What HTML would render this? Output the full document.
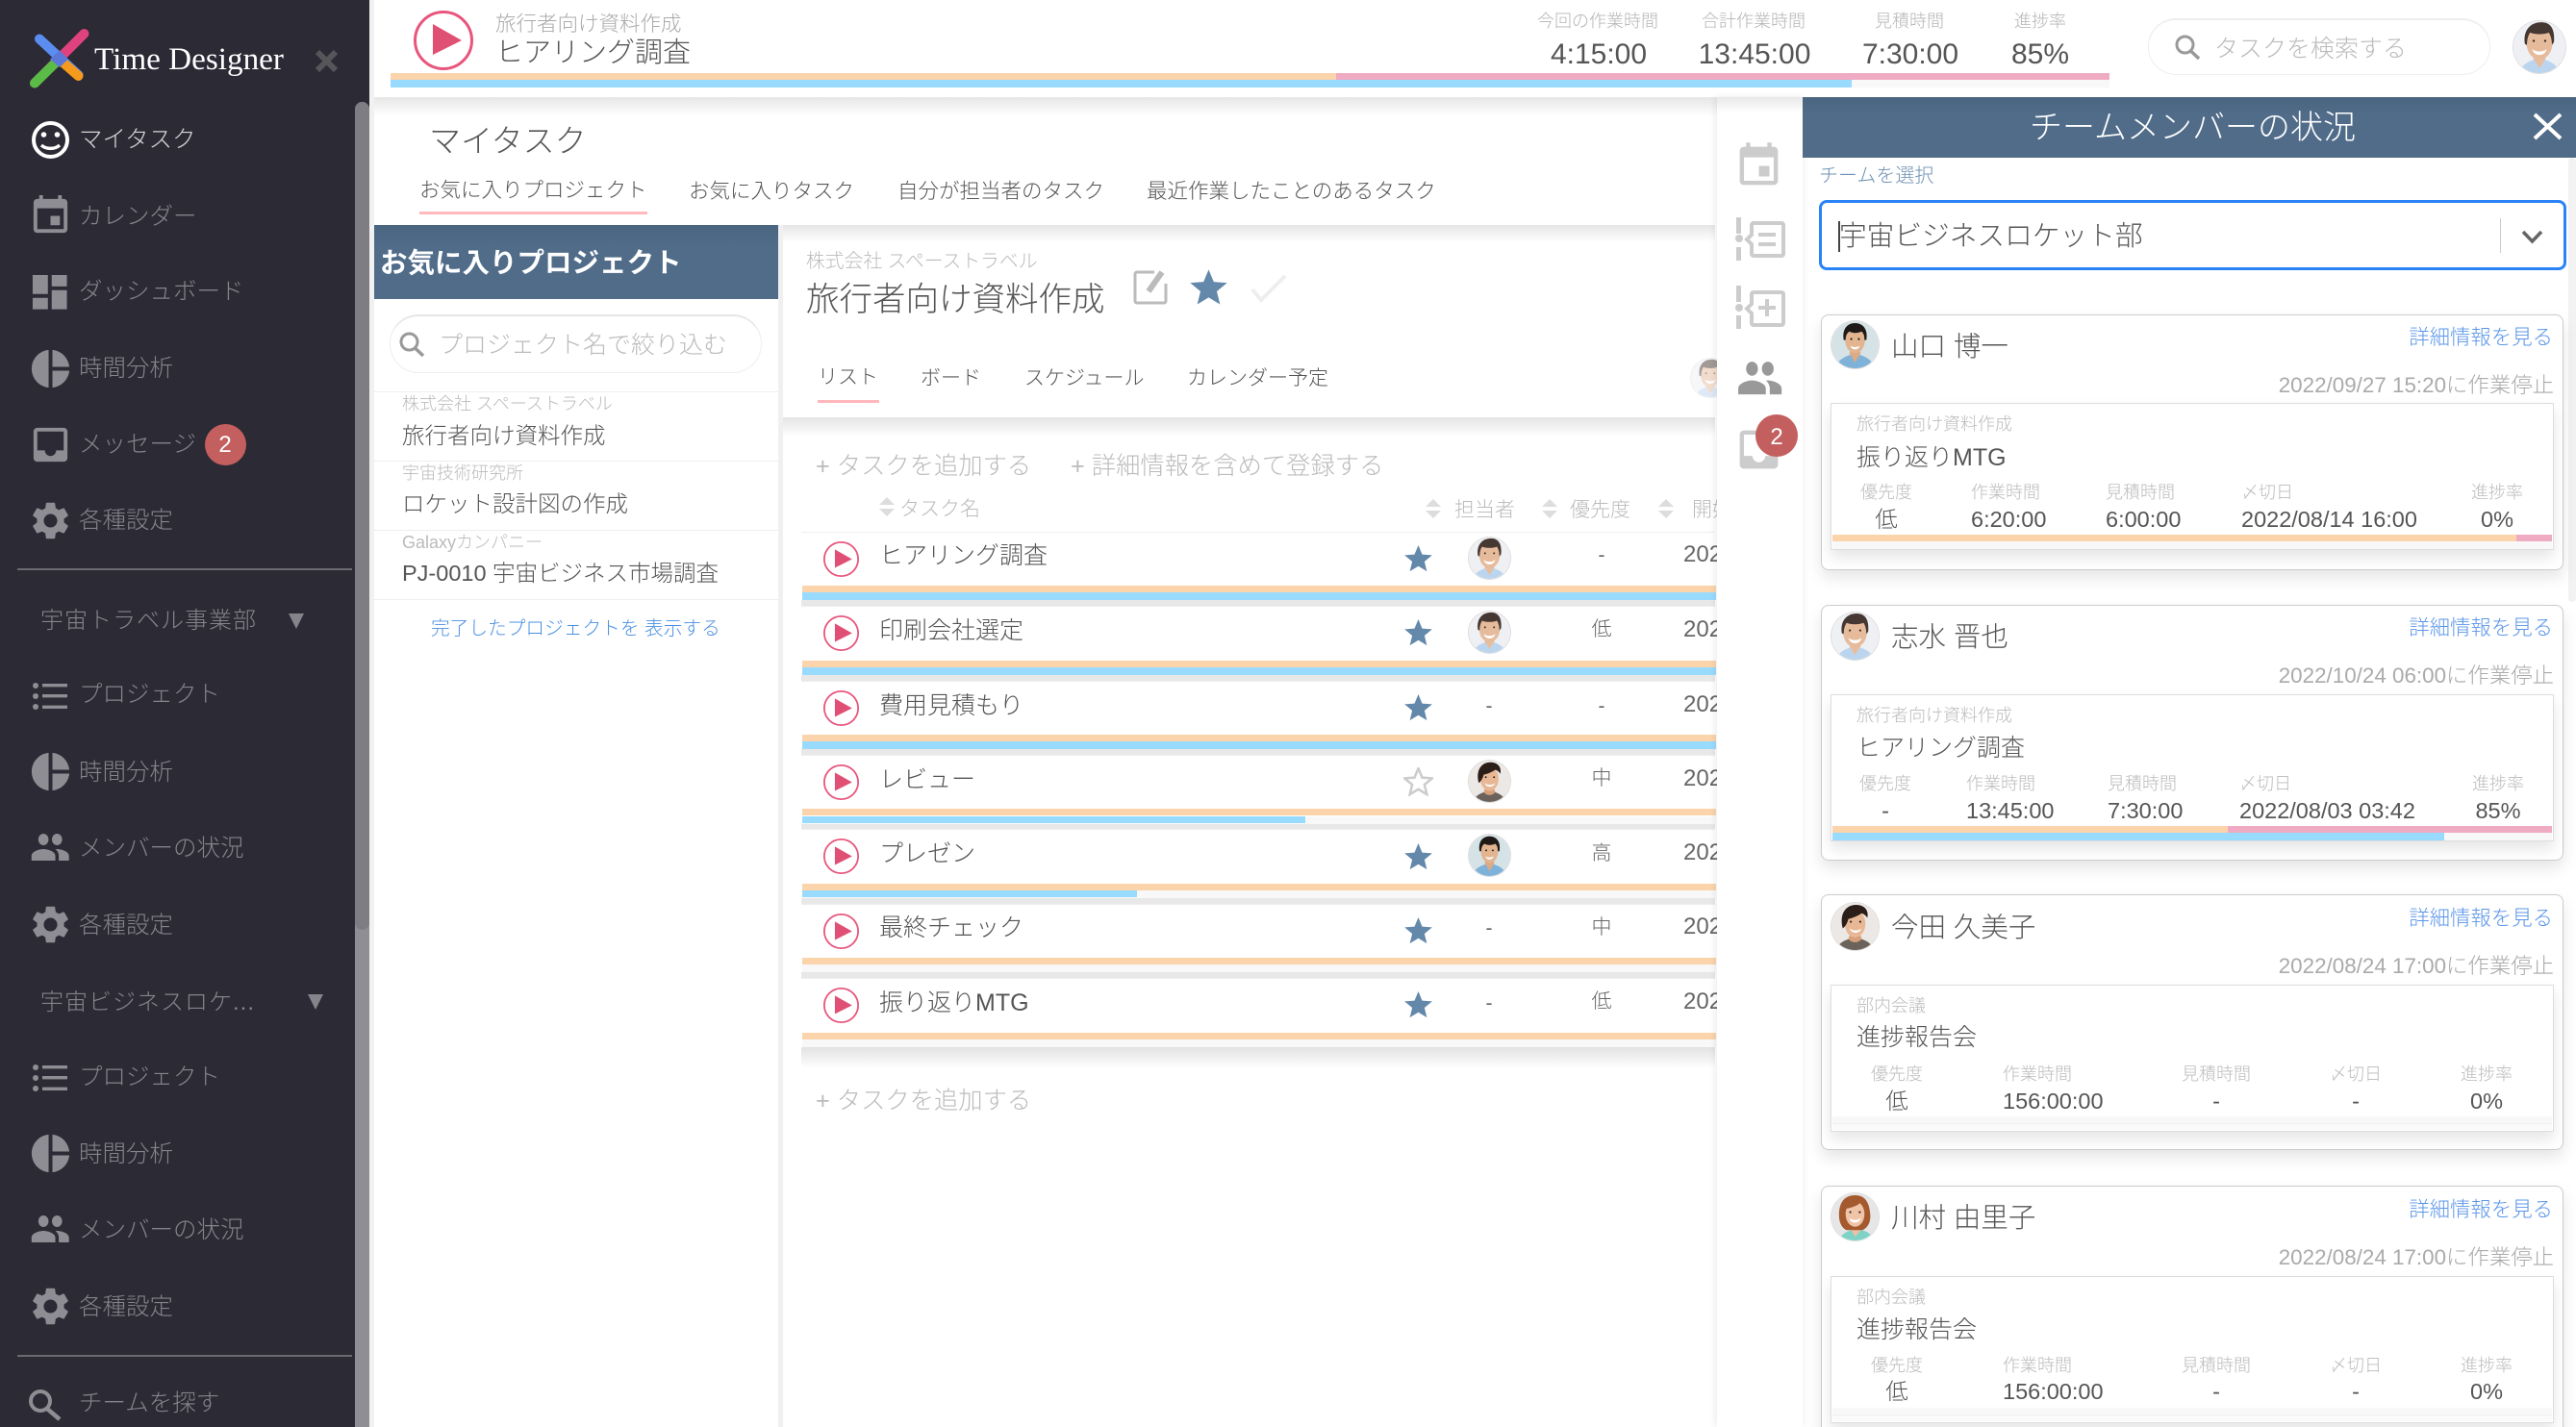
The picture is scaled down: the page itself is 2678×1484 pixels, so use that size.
<!DOCTYPE html>
<html lang="ja"><head><meta charset="utf-8"><title>Time Designer</title>
<style>
html,body{margin:0;padding:0;width:2678px;height:1484px;overflow:hidden;background:#fff}
body{position:relative;font-family:"Liberation Sans","Noto Sans CJK JP",sans-serif;font-weight:300;color:#555}
.a{position:absolute}
.t{position:absolute;line-height:0;white-space:nowrap;margin-top:2px}
.c{transform:translateX(-50%)}
.r{transform:translateX(-100%)}
svg{position:absolute;overflow:visible}
.n{font-size:24.500px;color:#85848b;margin-left:-2px}
.ic{fill:#8e8d93}
.f18{font-size:18px;color:#bbb}
.f24{font-size:23.500px;color:#555;margin-top:0}
.f25{font-size:25px;color:#555}
.add{font-size:25.300px;color:#bbb}
.h{font-size:21px;color:#bbb}
.p{font-size:21px;color:#666}
.d{font-size:24px;color:#666;margin-top:0}
.av{border-radius:50%;box-shadow:0 0 0 1px #ddd;overflow:hidden}
.card{position:absolute;left:1893px;width:770px;height:264px;border:1px solid #ccc;border-radius:8px;box-shadow:0 8px 16px rgba(0,0,0,.1);background:#fff}
.inner{position:absolute;left:1903px;width:750px;height:151px;border:1px solid #ddd;box-shadow:0 8px 14px rgba(0,0,0,.1);background:#fff}
.row{position:absolute;left:833px;width:950px;height:71px;background:#fff;border-top:1px solid #eee}
.gap{position:absolute;left:833px;width:950px;height:6px;background:#e8e8e8}
.or{position:absolute;left:834px;width:950px;height:7px;background:#fbd4ab}
.bl{position:absolute;left:834px;width:950px;height:8px;background:#f8f8f8}
.link{font-size:21.400px;color:#5a95e8}
.ts{font-size:22.400px;color:#aaa;margin-top:0}
.v{font-size:30px;margin-top:0}
</style></head><body>
<svg width="0" height="0" style="position:absolute">
<defs>
<symbol id="gear" viewBox="0 0 24 24"><path d="M19.14 12.94c.04-.3.06-.61.06-.94 0-.32-.02-.64-.07-.94l2.03-1.58c.18-.14.23-.41.12-.61l-1.92-3.32c-.12-.22-.37-.29-.59-.22l-2.39.96c-.5-.38-1.03-.7-1.62-.94l-.36-2.54c-.04-.24-.24-.41-.48-.41h-3.84c-.24 0-.43.17-.47.41l-.36 2.54c-.59.24-1.13.57-1.62.94l-2.39-.96c-.22-.08-.47 0-.59.22L2.74 8.87c-.12.21-.08.47.12.61l2.03 1.58c-.05.3-.09.63-.09.94s.02.64.07.94l-2.03 1.58c-.18.14-.23.41-.12.61l1.92 3.32c.12.22.37.29.59.22l2.39-.96c.5.38 1.03.7 1.62.94l.36 2.54c.05.24.24.41.48.41h3.84c.24 0 .44-.17.47-.41l.36-2.54c.59-.24 1.13-.56 1.62-.94l2.39.96c.22.08.47 0 .59-.22l1.92-3.32c.12-.22.07-.47-.12-.61l-2.01-1.58zM12 15.6c-1.98 0-3.6-1.62-3.6-3.6s1.62-3.6 3.6-3.6 3.6 1.62 3.6 3.6-1.62 3.6-3.6 3.6z"/></symbol>
<symbol id="pie" viewBox="0 0 24 24"><path d="M11 2v20c-5.07-.5-9-4.79-9-10s3.93-9.5 9-10zm2.03 0v8.99H22c-.47-4.74-4.24-8.52-8.97-8.99zm0 11.01V22c4.74-.47 8.5-4.25 8.97-8.99h-8.97z"/></symbol>
<symbol id="ppl" viewBox="0 0 24 24"><path d="M16 11c1.66 0 2.99-1.34 2.99-3S17.66 5 16 5c-1.66 0-3 1.34-3 3s1.34 3 3 3zm-8 0c1.66 0 2.99-1.34 2.99-3S9.66 5 8 5C6.34 5 5 6.34 5 8s1.34 3 3 3zm0 2c-2.33 0-7 1.17-7 3.5V19h14v-2.5c0-2.33-4.67-3.5-7-3.5zm8 0c-.29 0-.62.02-.97.05 1.16.84 1.97 1.97 1.97 3.45V19h6v-2.5c0-2.33-4.67-3.5-7-3.5z"/></symbol>
<symbol id="cal" viewBox="0 0 24 24"><path d="M17 12h-5v5h5v-5zM16 1v2H8V1H6v2H5c-1.11 0-1.99.9-1.99 2L3 19c0 1.1.89 2 2 2h14c1.1 0 2-.9 2-2V5c0-1.1-.9-2-2-2h-1V1h-2zm3 18H5V8h14v11z"/></symbol>
<symbol id="inbox" viewBox="0 0 24 24"><path d="M19 3H4.99c-1.11 0-1.98.89-1.98 2L3 19c0 1.1.88 2 1.99 2H19c1.1 0 2-.9 2-2V5c0-1.11-.9-2-2-2zm0 12h-4c0 1.66-1.35 3-3 3s-3-1.34-3-3H4.99V5H19v10z"/></symbol>
<symbol id="list" viewBox="0 0 36 28"><circle cx="3" cy="3" r="3"/><circle cx="3" cy="14" r="3"/><circle cx="3" cy="25" r="3"/><rect x="10" y="1" width="26" height="3.4"/><rect x="10" y="12" width="26" height="3.4"/><rect x="10" y="23.6" width="26" height="3.4"/></symbol>
<symbol id="play" viewBox="0 0 62 64"><circle cx="31" cy="32" r="29.5" fill="#fff" stroke="#e8557d" stroke-width="3"/><path d="M20 15L50 32 20 47z" fill="#e05075"/></symbol>
<symbol id="star" viewBox="0 0 24 24"><path d="M12 .8l3.2 7.7 8.3.6-6.4 5.3 2 8.1L12 18.2 4.9 22.5l2-8.1L.5 9.1l8.3-.6z"/></symbol>
<symbol id="sort" viewBox="0 0 18 20"><path d="M9 0l8 8H1zM9 20l-8-8h16z" fill="#ddd"/></symbol>
<symbol id="m1" viewBox="0 0 50 50"><rect width="50" height="50" fill="#eef0f4"/><path d="M6 50c1-8 8-11 14-13h10c6 2 13 5 14 13z" fill="#bcd5ee"/><path d="M19 36l6 9 6-9-2-5h-8z" fill="#e7bd9e"/><ellipse cx="25" cy="21" rx="12.500" ry="16" fill="#e6bb9c"/><path d="M11 22C9 9 16 1 27 1c9 0 13 7 12 19l-2 3c0-5-1-9-3-12-5 2-13 2-18 0-2 3-3 7-3 12z" fill="#453732"/><path d="M18 27c4 3 10 3 14 0-1 4-4 5.500-7 5.500s-6-1.500-7-5.500z" fill="#fff"/><circle cx="19.500" cy="19" r="1.100" fill="#3a2a22"/><circle cx="30.500" cy="19" r="1.100" fill="#3a2a22"/></symbol>
<symbol id="m2" viewBox="0 0 50 50"><rect width="50" height="50" fill="#d6e3e6"/><path d="M5 50c1-9 9-12 14-14h12c5 2 13 5 14 14z" fill="#7fb2d8"/><path d="M19 34l6 10 6-10-2-5h-8z" fill="#dcaa85"/><ellipse cx="25" cy="20" rx="10.500" ry="14" fill="#e2b48f"/><path d="M13 20C11 8 17 2 25 2s14 6 12 18l-2 0c0-5-1-7-3-9-5 2-9 2-13 0-3 2-4 5-4 9z" fill="#1f1a18"/><path d="M20 26c3 2 7 2 10 0-1 3-3 4-5 4s-4-1-5-4z" fill="#fff"/><circle cx="21" cy="19" r="1.100" fill="#222"/><circle cx="29" cy="19" r="1.100" fill="#222"/></symbol>
<symbol id="f1" viewBox="0 0 50 50"><rect width="50" height="50" fill="#ece8e6"/><path d="M6 50c1-8 8-10 13-12h12c5 2 12 4 13 12z" fill="#6a625b"/><path d="M18 38c3 5 11 5 14 0l-3-9h-8z" fill="#d8a07a"/><ellipse cx="25" cy="22" rx="11" ry="14.500" fill="#e8b896"/><path d="M12 27C8 12 15 2 26 2c9 0 14 6 12 14-1-2-3-4-6-5-4 3-10 5-14 6-1 3-2 7-6 10z" fill="#2b1d18"/><path d="M19 27c4 3 9 3 13 0-1 3-4 4.500-6.500 4.500s-5.500-1.500-6.500-4.500z" fill="#fff"/><circle cx="20.500" cy="20" r="1.100" fill="#222"/><circle cx="30.500" cy="20" r="1.100" fill="#222"/></symbol>
<symbol id="f2" viewBox="0 0 50 50"><rect width="50" height="50" fill="#e6e6e6"/><path d="M8 50c2-7 9-10 14-11h10c5 1 11 4 13 11z" fill="#7fd3c6"/><path d="M20 37l5 9 8-9-3-7h-8z" fill="#eec0a2"/><path d="M25 2C12 2 8 12 8 23c0 8 3 14 8 16h17c6-3 9-9 8-18C40 10 36 2 25 2z" fill="#a5592e"/><ellipse cx="25" cy="22" rx="10" ry="13.500" fill="#f0c4a6"/><path d="M17 16c4-1 12-3 14-7 3 2 4 5 4 9l3-3c-2-7-7-10-14-10-6 0-11 4-12 12z" fill="#a5592e"/><path d="M19 26c3 3 9 3 12 0-1 4-3 5-6 5s-5-1-6-5z" fill="#fff"/><circle cx="20" cy="20" r="1.100" fill="#322"/><circle cx="30" cy="20" r="1.100" fill="#322"/></symbol>
</defs></svg>

<!-- sidebar -->
<div class="a" style="left:0;top:0;width:384px;height:1484px;background:#2b2a35"></div>
<div class="a" style="left:369px;top:106px;width:15px;height:1378px;background:#8f8e94;border-radius:8px 8px 0 0"></div>
<div class="a" style="left:369px;top:106px;width:15px;height:861px;background:#7e7d84;border-radius:8px"></div>
<div class="a" style="left:384px;top:0;width:5px;height:1484px;background:#f1f1f1"></div>
<svg style="left:0;top:0" width="110" height="110" stroke-linecap="round" fill="none"><path d="M87.500 35L36 86.500" stroke="#e0427e" stroke-width="10"/><path d="M36 86.500L61 62" stroke="#5abb47" stroke-width="10"/><path d="M41 40.500L81.500 78" stroke="#5b8cf0" stroke-width="10"/><path d="M62 62L81.500 79" stroke="#f69a1d" stroke-width="10"/><path d="M62 52.500L52 61.500 62 70 71 61.500z" fill="#5b78d8"/></svg>
<div class="t" style="left:98px;top:60px;font:33.200px 'Liberation Serif',serif;line-height:0;color:#fff">Time Designer</div>
<svg style="left:328px;top:52px" width="23" height="23"><path d="M2 2L21 21M21 2L2 21" stroke="#55555a" stroke-width="6"/></svg>

<svg style="left:33px;top:126px" width="39" height="39" fill="none"><circle cx="19.500" cy="19.500" r="17.500" stroke="#fff" stroke-width="4"/><circle cx="12.500" cy="14" r="2.800" fill="#fff"/><circle cx="26.500" cy="14" r="2.800" fill="#fff"/><path d="M10 25c5 4.500 14 4.500 19 0" stroke="#fff" stroke-width="3.500"/></svg>
<div class="t n" style="left:84px;top:144px;color:#d4d4d6">マイタスク</div>
<svg class="ic" style="left:29px;top:201px" width="47" height="47"><use href="#cal"/></svg>
<div class="t n" style="left:84px;top:224px">カレンダー</div>
<svg class="ic" style="left:28px;top:280px" width="48" height="48"><path d="M6 6h16v20H6zM6 30h16v12H6zM26 42h16V22H26zM26 6v12h16V6z" transform="scale(.99)"/></svg>
<div class="t n" style="left:84px;top:302px">ダッシュボード</div>
<svg class="ic" style="left:29px;top:360px" width="47" height="47"><use href="#pie"/></svg>
<div class="t n" style="left:84px;top:382px">時間分析</div>
<svg class="ic" style="left:29px;top:439px" width="47" height="47"><use href="#inbox"/></svg>
<div class="t n" style="left:84px;top:461px">メッセージ</div>
<div class="a" style="left:213px;top:441px;width:43px;height:43px;border-radius:50%;background:#c45f5f"></div>
<div class="t c" style="left:234px;top:461px;font-size:24px;color:#fff">2</div>
<svg class="ic" style="left:29px;top:518px" width="47" height="47"><use href="#gear"/></svg>
<div class="t n" style="left:84px;top:540px">各種設定</div>
<div class="a" style="left:18px;top:591px;width:348px;height:2px;background:#6b6a72"></div>

<div class="t n" style="left:44px;top:644px;letter-spacing:1px;font-size:24px">宇宙トラベル事業部</div>
<svg style="left:300px;top:638px" width="16" height="16"><path d="M0 0h16L8 16z" fill="#85848b"/></svg>
<svg class="ic" style="left:34px;top:710px" width="36" height="28"><use href="#list"/></svg>
<div class="t n" style="left:84px;top:721px">プロジェクト</div>
<svg class="ic" style="left:29px;top:779px" width="47" height="47"><use href="#pie"/></svg>
<div class="t n" style="left:84px;top:802px">時間分析</div>
<svg class="ic" style="left:31px;top:857px" width="44" height="48"><use href="#ppl" width="24" height="24" transform="scale(1.77,2)"/></svg>
<div class="t n" style="left:84px;top:881px">メンバーの状況</div>
<svg class="ic" style="left:29px;top:938px" width="47" height="47"><use href="#gear"/></svg>
<div class="t n" style="left:84px;top:961px">各種設定</div>
<div class="t n" style="left:44px;top:1041px;letter-spacing:1px;font-size:24px">宇宙ビジネスロケ...</div>
<svg style="left:320px;top:1034px" width="16" height="16"><path d="M0 0h16L8 16z" fill="#85848b"/></svg>
<svg class="ic" style="left:34px;top:1107px" width="36" height="28"><use href="#list"/></svg>
<div class="t n" style="left:84px;top:1119px">プロジェクト</div>
<svg class="ic" style="left:29px;top:1176px" width="47" height="47"><use href="#pie"/></svg>
<div class="t n" style="left:84px;top:1199px">時間分析</div>
<svg class="ic" style="left:31px;top:1254px" width="44" height="48"><use href="#ppl" width="24" height="24" transform="scale(1.77,2)"/></svg>
<div class="t n" style="left:84px;top:1278px">メンバーの状況</div>
<svg class="ic" style="left:29px;top:1335px" width="47" height="47"><use href="#gear"/></svg>
<div class="t n" style="left:84px;top:1358px">各種設定</div>
<div class="a" style="left:18px;top:1409px;width:348px;height:2px;background:#6b6a72"></div>
<svg style="left:29px;top:1445px" width="35" height="33" fill="none" stroke="#8e8d93"><circle cx="13" cy="12" r="10" stroke-width="4"/><path d="M20 20L33 31" stroke-width="4.500"/></svg>
<div class="t n" style="left:84px;top:1458px">チームを探す</div>

<!-- header -->
<div class="a" style="left:389px;top:101px;width:2289px;height:20px;background:linear-gradient(#e6e6e6,#fff)"></div>
<svg style="left:430px;top:10px" width="62" height="64"><use href="#play"/></svg>
<div class="t" style="left:515px;top:23px;font-size:21.500px;color:#aaa">旅行者向け資料作成</div>
<div class="t" style="left:515px;top:53px;font-size:29px;color:#555">ヒアリング調査</div>
<div class="t c f18" style="left:1661px;top:20px;color:#b5b5b5">今回の作業時間</div>
<div class="t c f18" style="left:1823px;top:20px;color:#b5b5b5">合計作業時間</div>
<div class="t c f18" style="left:1985px;top:20px;color:#b5b5b5">見積時間</div>
<div class="t c f18" style="left:2121px;top:20px;color:#b5b5b5">進捗率</div>
<div class="t c v" style="left:1662px;top:57px">4:15:00</div>
<div class="t c v" style="left:1824px;top:57px">13:45:00</div>
<div class="t c v" style="left:1986px;top:57px">7:30:00</div>
<div class="t c v" style="left:2121px;top:57px">85%</div>
<div class="a" style="left:406px;top:76px;width:983px;height:7px;background:#fbd4ab"></div>
<div class="a" style="left:1389px;top:76px;width:804px;height:7px;background:#efabc2"></div>
<div class="a" style="left:406px;top:83px;width:1787px;height:8px;background:#f8f8f8"></div>
<div class="a" style="left:406px;top:83px;width:1519px;height:8px;background:#99dbff"></div>
<div class="a" style="left:2233px;top:19px;width:354px;height:56px;border:1px solid #eee;border-top:2px solid #eee;border-radius:29px"></div>
<svg style="left:2261px;top:36px" width="27" height="26" fill="none" stroke="#999"><circle cx="10.500" cy="10.500" r="8.500" stroke-width="3"/><path d="M16.500 17L25 25" stroke-width="3.500"/></svg>
<div class="t" style="left:2302px;top:49px;font-size:25px;color:#bbb">タスクを検索する</div>
<svg class="av" style="left:2613px;top:22px" width="54" height="54"><use href="#m1"/></svg>

<!-- tabs -->
<div class="t" style="left:446px;top:145px;font-size:33px">マイタスク</div>
<div class="t" style="left:436px;top:196px;font-size:21.500px">お気に入りプロジェクト</div>
<div class="a" style="left:436px;top:220px;width:237px;height:3px;background:#ffb8bc"></div>
<div class="t" style="left:716px;top:197px;font-size:21.500px">お気に入りタスク</div>
<div class="t" style="left:933px;top:197px;font-size:21.500px">自分が担当者のタスク</div>
<div class="t" style="left:1192px;top:197px;font-size:21.500px">最近作業したことのあるタスク</div>

<!-- left panel -->
<div class="a" style="left:389px;top:234px;width:420px;height:77px;background:linear-gradient(#4a6580,#506c89 30%)"></div>
<div class="t" style="left:395px;top:272px;font-size:28.500px;font-weight:700;color:#fff">お気に入りプロジェクト</div>
<div class="a" style="left:405px;top:327px;width:385px;height:58px;border:1px solid #eee;border-top:2px solid #e6e6e6;border-radius:30px"></div>
<svg style="left:415px;top:345px" width="27" height="26" fill="none" stroke="#999"><circle cx="10.500" cy="10.500" r="8.500" stroke-width="3"/><path d="M16.500 17L25 25" stroke-width="3.500"/></svg>
<div class="t" style="left:456px;top:357px;font-size:25px;color:#bbb">プロジェクト名で絞り込む</div>
<div class="a" style="left:389px;top:407px;width:420px;height:1px;background:#eee"></div>
<div class="t f18" style="left:418px;top:418px">株式会社 スペーストラベル</div>
<div class="t" style="left:418px;top:451px;font-size:23.500px">旅行者向け資料作成</div>
<div class="a" style="left:389px;top:479px;width:420px;height:1px;background:#eee"></div>
<div class="t f18" style="left:418px;top:490px">宇宙技術研究所</div>
<div class="t" style="left:418px;top:522px;font-size:23.500px">ロケット設計図の作成</div>
<div class="a" style="left:389px;top:551px;width:420px;height:1px;background:#eee"></div>
<div class="t f18" style="left:418px;top:562px">Galaxyカンパニー</div>
<div class="t" style="left:418px;top:594px;font-size:23.500px">PJ-0010 宇宙ビジネス市場調査</div>
<div class="a" style="left:389px;top:623px;width:420px;height:1px;background:#eee"></div>
<div class="t" style="left:448px;top:652px;font-size:19.700px;color:#4a90e2">完了したプロジェクトを 表示する</div>
<div class="a" style="left:809px;top:234px;width:5px;height:1250px;background:#f0f0f0"></div>

<!-- center header -->
<div class="a" style="left:814px;top:234px;width:969px;height:18px;background:linear-gradient(#e6e6e6,#fff)"></div>
<div class="t" style="left:838px;top:270px;font-size:19.800px;color:#bbb">株式会社 スペーストラベル</div>
<div class="t" style="left:838px;top:310px;font-size:34.500px">旅行者向け資料作成</div>
<svg style="left:1178px;top:278px" width="40" height="40" fill="none" stroke="#bbb"><path d="M22 5H4a2 2 0 0 0-2 2v28a2 2 0 0 0 2 2h28a2 2 0 0 0 2-2V17" stroke-width="3"/><path d="M16 25L30 5" stroke-width="6"/></svg>
<svg style="left:1235px;top:279px;fill:#6488aa" width="43" height="40"><use href="#star"/></svg>
<svg style="left:1300px;top:285px" width="38" height="29" fill="none"><path d="M2 16L11 27 36 2" stroke="#eee" stroke-width="4"/></svg>
<div class="t" style="left:850px;top:391px;font-size:21px">リスト</div>
<div class="a" style="left:850px;top:416px;width:64px;height:3px;background:#ffb8bc"></div>
<div class="t" style="left:957px;top:392px;font-size:21px">ボード</div>
<div class="t" style="left:1065px;top:392px;font-size:21px">スケジュール</div>
<div class="t" style="left:1234px;top:392px;font-size:21px">カレンダー予定</div>
<svg class="av" style="left:1758px;top:373px;opacity:.5" width="40" height="40"><use href="#m1"/></svg>
<div class="a" style="left:814px;top:434px;width:969px;height:20px;background:linear-gradient(#e4e4e4,#fff)"></div>

<!-- add / columns -->
<div class="t add" style="left:848px;top:483px">+ タスクを追加する</div>
<div class="t add" style="left:1113px;top:483px">+ 詳細情報を含めて登録する</div>
<svg style="left:913px;top:517px" width="18" height="20"><use href="#sort"/></svg>
<div class="t h" style="left:935px;top:528px">タスク名</div>
<svg style="left:1481px;top:519px" width="18" height="20"><use href="#sort"/></svg>
<div class="t h" style="left:1512px;top:529px">担当者</div>
<svg style="left:1602px;top:519px" width="18" height="20"><use href="#sort"/></svg>
<div class="t h" style="left:1632px;top:529px">優先度</div>
<svg style="left:1723px;top:519px" width="18" height="20"><use href="#sort"/></svg>
<div class="t h" style="left:1759px;top:529px">開始</div>

<!-- rows -->
<div class="a" style="left:833px;top:1089px;width:950px;height:22px;background:linear-gradient(#e2e2e2,#fff)"></div>

<div class="row" style="top:553px"></div><div class="or" style="top:609px"></div><div class="bl" style="top:616px;background:#99dbff"></div><div class="gap" style="top:624px"></div>
<svg style="left:856px;top:562px" width="37" height="39"><use href="#play"/></svg>
<div class="t f25" style="left:914px;top:576px">ヒアリング調査</div>
<svg style="left:1459px;top:566px;fill:#6488aa" width="31" height="30"><use href="#star"/></svg>
<svg class="av" style="left:1527px;top:559px" width="43" height="43"><use href="#m1"/></svg>
<div class="t c p" style="left:1665px;top:576px">-</div><div class="t d" style="left:1750px;top:577px">2022</div>

<div class="row" style="top:630px"></div><div class="or" style="top:687px"></div><div class="bl" style="top:694px;background:#99dbff"></div><div class="gap" style="top:702px"></div>
<svg style="left:856px;top:639px" width="37" height="39"><use href="#play"/></svg>
<div class="t f25" style="left:914px;top:654px">印刷会社選定</div>
<svg style="left:1459px;top:643px;fill:#6488aa" width="31" height="30"><use href="#star"/></svg>
<svg class="av" style="left:1527px;top:636px" width="43" height="43"><use href="#m1"/></svg>
<div class="t c p" style="left:1665px;top:653px">低</div><div class="t d" style="left:1750px;top:655px">2022</div>

<div class="row" style="top:708px"></div><div class="or" style="top:764px"></div><div class="bl" style="top:771px;background:#99dbff"></div><div class="gap" style="top:779px"></div>
<svg style="left:856px;top:717px" width="37" height="39"><use href="#play"/></svg>
<div class="t f25" style="left:914px;top:732px">費用見積もり</div>
<svg style="left:1459px;top:721px;fill:#6488aa" width="31" height="30"><use href="#star"/></svg>
<div class="t c p" style="left:1548px;top:733px">-</div><div class="t c p" style="left:1665px;top:733px">-</div><div class="t d" style="left:1750px;top:733px">2022</div>

<div class="row" style="top:785px"></div><div class="or" style="top:841px"></div><div class="bl" style="top:849px"></div><div class="a" style="left:834px;top:849px;width:523px;height:7px;background:#99dbff"></div><div class="gap" style="top:857px"></div>
<svg style="left:856px;top:794px" width="37" height="39"><use href="#play"/></svg>
<div class="t f25" style="left:914px;top:809px">レビュー</div>
<svg style="left:1459px;top:798px;fill:#fff;stroke:#ccc;stroke-width:2" width="31" height="30"><use href="#star"/></svg>
<svg class="av" style="left:1527px;top:791px" width="43" height="43"><use href="#f1"/></svg>
<div class="t c p" style="left:1665px;top:808px">中</div><div class="t d" style="left:1750px;top:810px">2022</div>

<div class="row" style="top:862px"></div><div class="or" style="top:919px"></div><div class="bl" style="top:926px"></div><div class="a" style="left:834px;top:926px;width:348px;height:7px;background:#99dbff"></div><div class="gap" style="top:934px"></div>
<svg style="left:856px;top:871px" width="37" height="39"><use href="#play"/></svg>
<div class="t f25" style="left:914px;top:886px">プレゼン</div>
<svg style="left:1459px;top:876px;fill:#6488aa" width="31" height="30"><use href="#star"/></svg>
<svg class="av" style="left:1527px;top:868px" width="43" height="43"><use href="#m2"/></svg>
<div class="t c p" style="left:1665px;top:886px">高</div><div class="t d" style="left:1750px;top:887px">2022</div>

<div class="row" style="top:940px"></div><div class="or" style="top:996px"></div><div class="bl" style="top:1003px"></div><div class="gap" style="top:1011px"></div>
<svg style="left:856px;top:949px" width="37" height="39"><use href="#play"/></svg>
<div class="t f25" style="left:914px;top:963px">最終チェック</div>
<svg style="left:1459px;top:953px;fill:#6488aa" width="31" height="30"><use href="#star"/></svg>
<div class="t c p" style="left:1548px;top:964px">-</div><div class="t c p" style="left:1665px;top:963px">中</div><div class="t d" style="left:1750px;top:964px">2022</div>

<div class="row" style="top:1017px"></div><div class="or" style="top:1074px"></div><div class="bl" style="top:1081px"></div>
<svg style="left:856px;top:1026px" width="37" height="39"><use href="#play"/></svg>
<div class="t f25" style="left:914px;top:1041px">振り返りMTG</div>
<svg style="left:1459px;top:1030px;fill:#6488aa" width="31" height="30"><use href="#star"/></svg>
<div class="t c p" style="left:1548px;top:1042px">-</div><div class="t c p" style="left:1665px;top:1040px">低</div><div class="t d" style="left:1750px;top:1042px">2022</div>

<div class="t add" style="left:848px;top:1143px">+ タスクを追加する</div>

<!-- rail -->
<div class="a" style="left:1785px;top:101px;width:89px;height:1383px;background:#fff;box-shadow:-3px 0 6px rgba(0,0,0,.06),3px 0 6px rgba(0,0,0,.04)"></div>
<div class="a" style="left:1785px;top:101px;width:89px;height:16px;background:linear-gradient(#e8e8e8,#fff)"></div>
<svg style="left:1802px;top:146px;fill:#ccc" width="53" height="53"><use href="#cal"/></svg>
<svg style="left:1800px;top:224px" width="60" height="50" fill="none"><rect x="5" y="2" width="5" height="17" fill="#ccc"/><circle cx="8" cy="24" r="4" fill="#ccc"/><rect x="5" y="33" width="5" height="14" fill="#ccc"/><path d="M23 8h29a2 2 0 0 1 2 2v30a2 2 0 0 1-2 2H23a2 2 0 0 1-2-2V30l-5-5 5-5V10a2 2 0 0 1 2-2z" stroke="#ccc" stroke-width="4"/><rect x="28" y="18" width="18" height="4" fill="#ccc"/><rect x="28" y="28" width="18" height="4" fill="#ccc"/></svg>
<svg style="left:1800px;top:295px" width="60" height="50" fill="none"><rect x="5" y="2" width="5" height="17" fill="#ccc"/><circle cx="8" cy="25" r="4" fill="#ccc"/><rect x="5" y="33" width="5" height="14" fill="#ccc"/><path d="M23 9h29a2 2 0 0 1 2 2v30a2 2 0 0 1-2 2H23a2 2 0 0 1-2-2V31l-5-5 5-5V11a2 2 0 0 1 2-2z" stroke="#ccc" stroke-width="4"/><path d="M37 16v18M28 25h18" stroke="#ccc" stroke-width="4"/></svg>
<svg style="left:1805px;top:364px;fill:#999" width="50" height="58"><use href="#ppl" width="24" height="24" transform="scale(2.05,2.43)"/></svg>
<svg style="left:1802px;top:441px;fill:#ccc" width="53" height="53"><use href="#inbox"/></svg>
<div class="a" style="left:1825px;top:431px;width:44px;height:44px;border-radius:50%;background:#c45f5f"></div>
<div class="t c" style="left:1847px;top:453px;font-size:24px;color:#fff">2</div>

<!-- right panel -->
<div class="a" style="left:1874px;top:101px;width:804px;height:63px;background:linear-gradient(#4a6580,#506c89 30%)"></div>
<div class="t" style="left:2110px;top:131px;font-size:34px;color:#fff">チームメンバーの状況</div>
<svg style="left:2633px;top:117px" width="31" height="29"><path d="M2 2L29 27M29 2L2 27" stroke="#fff" stroke-width="4"/></svg>
<div class="a" style="left:2670px;top:164px;width:8px;height:462px;background:#f2f2f2;border-radius:4px"></div>
<div class="t" style="left:1891px;top:181px;font-size:20px;color:#6d8fb3">チームを選択</div>
<div class="a" style="left:1891px;top:208px;width:771px;height:67px;border:3px solid #2a83f5;border-radius:8px"></div>
<div class="t" style="left:1912px;top:244px;font-size:28.700px">宇宙ビジネスロケット部</div>
<div class="a" style="left:1911px;top:230px;width:2px;height:32px;background:#444"></div>
<div class="a" style="left:2599px;top:227px;width:1px;height:36px;background:#ccc"></div>
<svg style="left:2621px;top:239px" width="23" height="14" fill="none"><path d="M2 2L11.500 12 21 2" stroke="#666" stroke-width="3.500"/></svg>

<!-- card 1 -->
<div class="card" style="top:327px"></div>
<svg class="av" style="left:1904px;top:334px" width="49" height="49"><use href="#m2"/></svg>
<div class="t" style="left:1966px;top:359px;font-size:28.500px">山口 博一</div>
<div class="t link r" style="left:2654px;top:349px">詳細情報を見る</div>
<div class="t ts r" style="left:2655px;top:401px">2022/09/27 15:20に作業停止</div>
<div class="inner" style="top:419px"></div>
<div class="t f18" style="left:1930px;top:439px">旅行者向け資料作成</div>
<div class="t f25" style="left:1930px;top:474px">振り返りMTG</div>
<div class="t c f18" style="left:1961px;top:510px">優先度</div><div class="t c f24" style="left:1961px;top:540px">低</div>
<div class="t f18" style="left:2049px;top:510px">作業時間</div><div class="t f24" style="left:2049px;top:540px">6:20:00</div>
<div class="t f18" style="left:2189px;top:510px">見積時間</div><div class="t f24" style="left:2189px;top:540px">6:00:00</div>
<div class="t f18" style="left:2330px;top:510px">〆切日</div><div class="t f24" style="left:2330px;top:540px">2022/08/14 16:00</div>
<div class="t c f18" style="left:2596px;top:510px">進捗率</div><div class="t c f24" style="left:2596px;top:540px">0%</div>
<div class="a" style="left:1905px;top:556px;width:711px;height:7px;background:#fbd4ab"></div>
<div class="a" style="left:2616px;top:556px;width:37px;height:7px;background:#efabc2"></div>
<div class="a" style="left:1905px;top:563px;width:748px;height:8px;background:#f8f8f8"></div>

<!-- card 2 -->
<div class="card" style="top:629px"></div>
<svg class="av" style="left:1904px;top:637px" width="49" height="49"><use href="#m1"/></svg>
<div class="t" style="left:1966px;top:661px;font-size:28.500px">志水 晋也</div>
<div class="t link r" style="left:2654px;top:651px">詳細情報を見る</div>
<div class="t ts r" style="left:2655px;top:703px">2022/10/24 06:00に作業停止</div>
<div class="inner" style="top:722px"></div>
<div class="t f18" style="left:1930px;top:742px">旅行者向け資料作成</div>
<div class="t f25" style="left:1930px;top:776px">ヒアリング調査</div>
<div class="t c f18" style="left:1960px;top:813px">優先度</div><div class="t c f24" style="left:1960px;top:843px">-</div>
<div class="t f18" style="left:2044px;top:813px">作業時間</div><div class="t f24" style="left:2044px;top:843px">13:45:00</div>
<div class="t f18" style="left:2191px;top:813px">見積時間</div><div class="t f24" style="left:2191px;top:843px">7:30:00</div>
<div class="t f18" style="left:2328px;top:813px">〆切日</div><div class="t f24" style="left:2328px;top:843px">2022/08/03 03:42</div>
<div class="t c f18" style="left:2597px;top:813px">進捗率</div><div class="t c f24" style="left:2597px;top:843px">85%</div>
<div class="a" style="left:1905px;top:859px;width:411px;height:7px;background:#fbd4ab"></div>
<div class="a" style="left:2316px;top:859px;width:337px;height:7px;background:#efabc2"></div>
<div class="a" style="left:1905px;top:866px;width:748px;height:8px;background:#f8f8f8"></div>
<div class="a" style="left:1905px;top:866px;width:636px;height:8px;background:#99dbff"></div>

<!-- card 3 -->
<div class="card" style="top:930px"></div>
<svg class="av" style="left:1904px;top:939px" width="49" height="49"><use href="#f1"/></svg>
<div class="t" style="left:1966px;top:963px;font-size:28.500px">今田 久美子</div>
<div class="t link r" style="left:2654px;top:953px">詳細情報を見る</div>
<div class="t ts r" style="left:2655px;top:1005px">2022/08/24 17:00に作業停止</div>
<div class="inner" style="top:1024px"></div>
<div class="t f18" style="left:1930px;top:1044px">部内会議</div>
<div class="t f25" style="left:1930px;top:1077px">進捗報告会</div>
<div class="t c f18" style="left:1972px;top:1115px">優先度</div><div class="t c f24" style="left:1972px;top:1145px">低</div>
<div class="t f18" style="left:2082px;top:1115px">作業時間</div><div class="t f24" style="left:2082px;top:1145px">156:00:00</div>
<div class="t c f18" style="left:2304px;top:1115px">見積時間</div><div class="t c f24" style="left:2304px;top:1145px">-</div>
<div class="t c f18" style="left:2449px;top:1115px">〆切日</div><div class="t c f24" style="left:2449px;top:1145px">-</div>
<div class="t c f18" style="left:2585px;top:1115px">進捗率</div><div class="t c f24" style="left:2585px;top:1145px">0%</div>
<div class="a" style="left:1905px;top:1161px;width:748px;height:14px;background:linear-gradient(#f8f8f8 50%,#eee 50%,#eee 56%,#fafafa 56%)"></div>

<!-- card 4 -->
<div class="card" style="top:1233px"></div>
<svg class="av" style="left:1904px;top:1241px" width="49" height="49"><use href="#f2"/></svg>
<div class="t" style="left:1966px;top:1265px;font-size:28.500px">川村 由里子</div>
<div class="t link r" style="left:2654px;top:1256px">詳細情報を見る</div>
<div class="t ts r" style="left:2655px;top:1308px">2022/08/24 17:00に作業停止</div>
<div class="inner" style="top:1327px"></div>
<div class="t f18" style="left:1930px;top:1347px">部内会議</div>
<div class="t f25" style="left:1930px;top:1381px">進捗報告会</div>
<div class="t c f18" style="left:1972px;top:1418px">優先度</div><div class="t c f24" style="left:1972px;top:1447px">低</div>
<div class="t f18" style="left:2082px;top:1418px">作業時間</div><div class="t f24" style="left:2082px;top:1447px">156:00:00</div>
<div class="t c f18" style="left:2304px;top:1418px">見積時間</div><div class="t c f24" style="left:2304px;top:1447px">-</div>
<div class="t c f18" style="left:2449px;top:1418px">〆切日</div><div class="t c f24" style="left:2449px;top:1447px">-</div>
<div class="t c f18" style="left:2585px;top:1418px">進捗率</div><div class="t c f24" style="left:2585px;top:1447px">0%</div>
<div class="a" style="left:1905px;top:1464px;width:748px;height:14px;background:linear-gradient(#f8f8f8 50%,#eee 50%,#eee 56%,#fafafa 56%)"></div>
</body></html>
